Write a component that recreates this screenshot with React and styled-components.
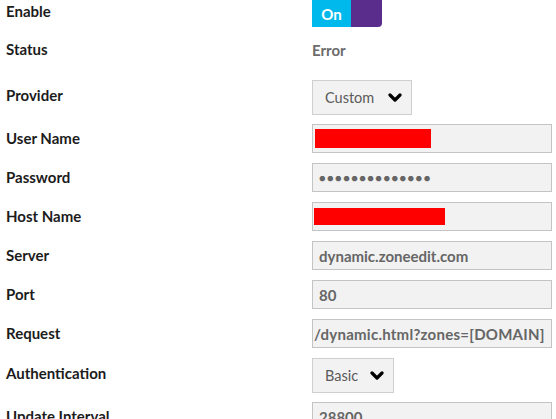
import React from "react";
import styled, { createGlobalStyle } from "styled-components";

const GlobalStyle = createGlobalStyle`
  body {
    margin: 0;
    background: #fff;
    font-family: Lato, "Open Sans", sans-serif;
  }
`;

const Form = styled.div`
  display: flex;
  flex-direction: column;
  gap: 10px;
  padding-left: 6px;
  width: 546px;
`;

const Row = styled.div`
  display: grid;
  grid-template-columns: 306px 1fr;
  align-items: center;
  height: ${(p) => p.$h}px;
  padding-bottom: ${(p) => p.$pb || 0}px;
`;

const Label = styled.div`
  font-size: 15px;
  font-weight: 700;
  color: #1c1c1c;
  margin-bottom: ${(p) => (p.$up ? 5 : 1)}px;
`;

const Value = styled.div`
  font-size: 15px;
  font-weight: 700;
  color: #6b6b6b;
`;

const Toggle = styled.div`
  display: flex;
  width: 70px;
  height: 27px;
  border-bottom-right-radius: 4px;
  overflow: hidden;
`;

const ToggleOn = styled.div`
  width: 39px;
  background: #00b9ec;
  color: #fff;
  font-size: 15px;
  font-weight: 700;
  display: flex;
  align-items: center;
  justify-content: center;
`;

const ToggleKnob = styled.div`
  flex: 1;
  background: #5a2d8c;
`;

const Select = styled.div`
  display: inline-flex;
  align-items: center;
  justify-self: start;
  gap: ${(p) => p.$gap}px;
  height: 33px;
  padding: 0 9px 0 12px;
  background: #f2f2f2;
  border: 1px solid #cfcfcf;
  color: #5a5a5a;
  font-size: 14.5px;
`;

const Input = styled.div`
  box-sizing: border-box;
  height: 29px;
  width: 240px;
  display: flex;
  align-items: center;
  padding-left: ${(p) => p.$pl ?? 6}px;
  background: #f2f2f2;
  border: 1px solid #c4c4c4;
  color: #666;
  font-size: 15px;
  font-weight: 700;
  letter-spacing: ${(p) => p.$ls || 0}px;
  overflow: hidden;
  white-space: nowrap;
`;

const Redacted = styled.div`
  height: ${(p) => p.$h}px;
  width: ${(p) => p.$w}px;
  background: #ff0000;
`;

const Dots = styled.span`
  letter-spacing: 1.45px;
  font-size: 11px;
`;

const Chevron = () => (
  <svg width="14" height="10" viewBox="0 0 14 10">
    <polyline
      points="2,2 7,7 12,2"
      fill="none"
      stroke="#000"
      strokeWidth="3.2"
      strokeLinecap="round"
      strokeLinejoin="round"
    />
  </svg>
);

const App = () => (
  <>
    <GlobalStyle />
    <Form>
      <Row $h={27}>
        <Label $up>Enable</Label>
        <Toggle>
          <ToggleOn>On</ToggleOn>
          <ToggleKnob />
        </Toggle>
      </Row>
      <Row $h={25} $pb={8}>
        <Label>Status</Label>
        <Value>Error</Value>
      </Row>
      <Row $h={34}>
        <Label $up>Provider</Label>
        <Select $gap={14}>
          Custom <Chevron />
        </Select>
      </Row>
      <Row $h={29}>
        <Label>User Name</Label>
        <Input $pl={2}>
          <Redacted $w={116} $h={19} />
        </Input>
      </Row>
      <Row $h={29}>
        <Label>Password</Label>
        <Input>
          <Dots>●●●●●●●●●●●●●●</Dots>
        </Input>
      </Row>
      <Row $h={29}>
        <Label>Host Name</Label>
        <Input $pl={1}>
          <Redacted $w={131} $h={17} />
        </Input>
      </Row>
      <Row $h={29}>
        <Label>Server</Label>
        <Input>dynamic.zoneedit.com</Input>
      </Row>
      <Row $h={29}>
        <Label>Port</Label>
        <Input>80</Input>
      </Row>
      <Row $h={29}>
        <Label>Request</Label>
        <Input $pl={1} $ls={0.25}>
          /dynamic.html?zones=[DOMAIN]
        </Input>
      </Row>
      <Row $h={34}>
        <Label $up>Authentication</Label>
        <Select $gap={12}>
          Basic <Chevron />
        </Select>
      </Row>
      <Row $h={29}>
        <Label>Update Interval</Label>
        <Input>28800</Input>
      </Row>
    </Form>
  </>
);

export default App;
